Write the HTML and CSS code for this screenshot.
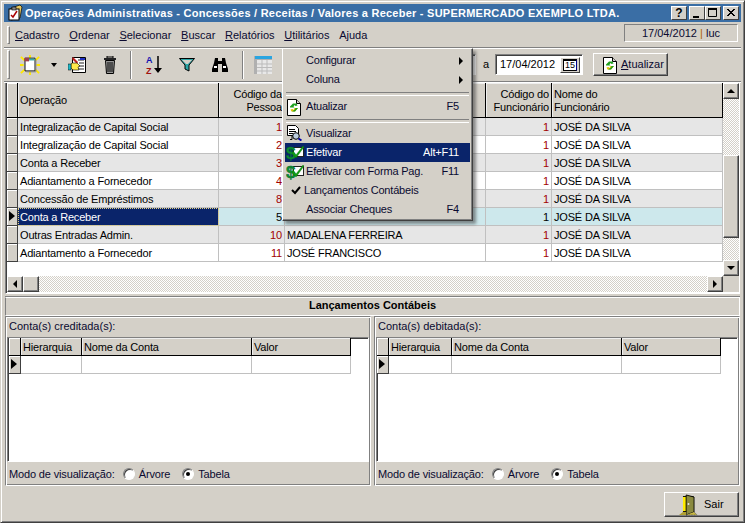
FILE: index.html
```html
<!DOCTYPE html>
<html lang="pt">
<head>
<meta charset="utf-8">
<title>Operações Administrativas</title>
<link rel="stylesheet" href="styles.css">
</head>
<body>
<svg class="defs" width="0" height="0">
  <symbol id="i-refresh" viewBox="0 0 16 18"><path d="M1.5 1.500h9l4 4v12h-13z" fill="#fff" stroke="#000"/><path d="M10.500 1.500v4h4" fill="#d4d0c8" stroke="#000"/><path d="M4 8.500 7 5.500h3.500l1 2-2 .5-1-1-1 1.500 1 1H4z" fill="#1fa01f"/><path d="M12 10l-3 3.500H5.500l-1-2 2-.5 1 1 1-1.500-1-.5H12z" fill="#e0c000"/><path d="M12 10l-3 3.500H6l3-2 .5-1.500H12z" fill="#1fa01f"/></symbol>
  <symbol id="i-view" viewBox="0 0 16 16"><path d="M1.500 .5h8l3 3v7h-11z" fill="#fff" stroke="#000"/><path d="M3 4.500h6M3 6.500h7M3 8.500h4M3 10.500h3v4h-2" stroke="#000" fill="none"/><circle cx="10" cy="11" r="3.300" fill="#bcd" stroke="#000"/><path d="M12.500 13.500l3 2" stroke="#00a" stroke-width="2"/></symbol>
</svg>
<div class="window">
  <header class="titlebar">
    <svg class="title-icon" width="18" height="18" viewBox="0 0 18 18"><path d="M5 4 14 1l2 2-2 11-9 2z" fill="#e8c860" stroke="#000" stroke-width=".7"/><rect x="3" y="5" width="10" height="11" fill="#fff" stroke="#000"/><path d="M5 11l2 2 4-6" fill="none" stroke="#a00" stroke-width="1.500"/><rect x="6" y="3" width="4" height="3" fill="#888" stroke="#000" stroke-width=".6"/></svg>
    <span class="title-text">Operações Administrativas - Concessões / Receitas / Valores a Receber - SUPERMERCADO EXEMPLO LTDA.</span>
    <div class="caption-btns">
      <span class="cap-btn cap-help">?</span>
      <span class="cap-gap"></span>
      <span class="cap-btn"><svg width="10" height="10"><rect x="1" y="8" width="6" height="2"/></svg></span>
      <span class="cap-btn"><svg width="10" height="10"><path d="M.5 1.500h8v7h-8z" fill="none" stroke="#000"/><rect x="0" y="0" width="9" height="2"/></svg></span>
      <span class="cap-gap"></span>
      <span class="cap-btn"><svg width="10" height="10"><path d="M1 1l7 7M2 1l7 7M8 1 1 8M9 1 2 8" stroke="#000"/></svg></span>
    </div>
  </header>

  <nav class="menubar">
    <span class="grip"></span>
    <span class="menu-item"><u>C</u>adastro</span>
    <span class="menu-item"><u>O</u>rdenar</span>
    <span class="menu-item"><u>S</u>elecionar</span>
    <span class="menu-item"><u>B</u>uscar</span>
    <span class="menu-item"><u>R</u>elatórios</span>
    <span class="menu-item"><u>U</u>tilitários</span>
    <span class="menu-item">A<u>j</u>uda</span>
    <span class="status-box">17/04/2012 <b class="pipe">|</b> luc</span>
  </nav>

  <div class="toolbar">
    <span class="grip tall"></span>
    <span class="tool tool-new"><svg width="20" height="20" viewBox="0 0 22 22"><path d="M11 0v4M11 18v4M1 2l4 4M21 2l-4 4M1 20l4-4M21 20l-4-4M0 11h4M18 11h4" stroke="#ffe800" stroke-width="2"/><path d="M5.500 3.500h11v14h-11z" fill="#fff" stroke="#000"/><rect x="5" y="3" width="5" height="4" fill="#a04050"/><rect x="10" y="4" width="6" height="2" fill="#3aa"/><path d="M7 18.500h10.500V5" fill="none" stroke="#888"/></svg></span>
    <span class="tool-arrow"></span>
    <span class="tool"><svg width="18" height="18" viewBox="0 0 18 18"><path d="M4.500 1.500h13v15h-13z" fill="#fff" stroke="#000"/><path d="M10 4h6M11 7h5M11 10h5M10 13h6" stroke="#222"/><path d="M5 1l5 5-1 2-5-5z" fill="#c02020"/><rect x="12" y="2" width="5" height="2" fill="#2030c0"/><path d="M4 7h5l3 3-2 1 1 3H5l-2-2V8z" fill="#ffe94a" stroke="#000" stroke-width=".6"/><rect x="0" y="8" width="3" height="6" fill="#20b8c8" stroke="#000" stroke-width=".5"/></svg></span>
    <span class="tool"><svg width="16" height="18" viewBox="0 0 16 18"><rect x="5" y="0" width="6" height="2" fill="none" stroke="#000"/><rect x="2" y="2" width="12" height="2" fill="#222"/><path d="M3.500 4.500h9l-1 13h-7z" fill="#999" stroke="#000"/><path d="M6 6v10M8 6v10M10 6v10" stroke="#000"/></svg></span>
    <span class="tool-sep"></span>
    <span class="tool"><svg width="18" height="20" viewBox="0 0 18 20"><text x="1" y="8" class="az-a">A</text><text x="1" y="19" class="az-z">Z</text><path d="M13 1v13" stroke="#000" stroke-width="1.500"/><path d="M9 13h8l-4 5z"/></svg></span>
    <span class="tool"><svg width="16" height="14" viewBox="0 0 16 14"><path d="M.5 .5h15L10 7v6L6 11V7z" fill="#2aa5a5" stroke="#000"/><path d="M3 2h10L9 6H7z" fill="#d4d0c8"/></svg></span>
    <span class="tool"><svg width="16" height="14" viewBox="0 0 16 14"><path d="M3 0h3v3h4V0h3l1 5 2 6v3H10V6H6v8H0v-3l2-6z"/><path d="M2 8h3v2H2zM11 8h3v2h-3z" fill="#fff"/></svg></span>
    <span class="tool-sep second"></span>
    <span class="tool"><svg width="18" height="18" viewBox="0 0 18 18"><rect x="0" y="0" width="18" height="18" fill="#b0b0b0"/><rect x="1" y="0" width="17" height="3" fill="#2aa5e0"/><rect x="3" y="4" width="15" height="14" fill="#e8e8e8"/><path d="M3 8h15M3 11.500h15M3 15h15M8 4v14M13 4v14" stroke="#bbb"/></svg></span>
    <span class="date-group">
      <span class="date-field hidden-date"><span class="cal-btn"></span></span>
      <span class="date-sep">a</span>
      <span class="date-field"><span class="date-value">17/04/2012</span><span class="cal-btn"><span class="cal-num">15</span></span></span>
    </span>
    <span class="btn btn-update"><svg width="16" height="18"><use href="#i-refresh"/></svg><span><u>A</u>tualizar</span></span>
  </div>

  <section class="main-grid">
    <div class="grid-body">
      <div class="row head">
        <div class="ind"></div>
        <div class="cell mid">Operação</div>
        <div class="cell num">Código da<br>Pessoa</div>
        <div class="cell"></div>
        <div class="cell num">Código do<br>Funcionário</div>
        <div class="cell">Nome do<br>Funcionário</div>
      </div>
      <div class="row alt"><div class="ind"></div><div class="cell">Integralização de Capital Social</div><div class="cell num red">1</div><div class="cell"></div><div class="cell num red">1</div><div class="cell">JOSÉ DA SILVA</div></div>
      <div class="row"><div class="ind"></div><div class="cell">Integralização de Capital Social</div><div class="cell num red">2</div><div class="cell"></div><div class="cell num red">1</div><div class="cell">JOSÉ DA SILVA</div></div>
      <div class="row alt"><div class="ind"></div><div class="cell">Conta a Receber</div><div class="cell num red">3</div><div class="cell"></div><div class="cell num red">1</div><div class="cell">JOSÉ DA SILVA</div></div>
      <div class="row"><div class="ind"></div><div class="cell">Adiantamento a Fornecedor</div><div class="cell num red">4</div><div class="cell"></div><div class="cell num red">1</div><div class="cell">JOSÉ DA SILVA</div></div>
      <div class="row alt"><div class="ind"></div><div class="cell">Concessão de Empréstimos</div><div class="cell num red">8</div><div class="cell"></div><div class="cell num red">1</div><div class="cell">JOSÉ DA SILVA</div></div>
      <div class="row selected"><div class="ind current"></div><div class="cell focus">Conta a Receber</div><div class="cell num">5</div><div class="cell"></div><div class="cell num">1</div><div class="cell">JOSÉ DA SILVA</div></div>
      <div class="row alt"><div class="ind"></div><div class="cell">Outras Entradas Admin.</div><div class="cell num red">10</div><div class="cell">MADALENA FERREIRA</div><div class="cell num red">1</div><div class="cell">JOSÉ DA SILVA</div></div>
      <div class="row"><div class="ind"></div><div class="cell">Adiantamento a Fornecedor</div><div class="cell num red">11</div><div class="cell">JOSÉ FRANCISCO</div><div class="cell num red">1</div><div class="cell">JOSÉ DA SILVA</div></div>
    </div>
    <div class="vscroll">
      <span class="sb-btn"><i class="tri up"></i></span>
      <span class="hatch grow-a"></span>
      <span class="sb-thumb v"></span>
      <span class="hatch grow-b"></span>
      <span class="sb-btn"><i class="tri down"></i></span>
    </div>
    <div class="hscroll">
      <span class="sb-btn"><i class="tri left"></i></span>
      <span class="sb-thumb h"></span>
      <span class="hatch grow-a"></span>
      <span class="sb-btn"><i class="tri right"></i></span>
    </div>
    <div class="corner"></div>
  </section>

  <h2 class="section-title">Lançamentos Contábeis</h2>

  <div class="panels">
    <section class="panel">
      <div class="panel-caption">Conta(s) creditada(s):</div>
      <div class="mini-grid">
        <div class="mini-row head"><div class="ind"></div><div class="cell">Hierarquia</div><div class="cell">Nome da Conta</div><div class="cell">Valor</div></div>
        <div class="mini-row"><div class="ind current"></div><div class="cell"></div><div class="cell"></div><div class="cell"></div></div>
      </div>
      <div class="mode-row">
        <span class="mode-label">Modo de visualização:</span>
        <span class="radio"></span><span class="radio-label">Árvore</span>
        <span class="radio on"></span><span class="radio-label">Tabela</span>
      </div>
    </section>
    <section class="panel debit">
      <div class="panel-caption">Conta(s) debitada(s):</div>
      <div class="mini-grid">
        <div class="mini-row head"><div class="ind"></div><div class="cell">Hierarquia</div><div class="cell">Nome da Conta</div><div class="cell">Valor</div></div>
        <div class="mini-row"><div class="ind current"></div><div class="cell"></div><div class="cell"></div><div class="cell"></div></div>
      </div>
      <div class="mode-row">
        <span class="mode-label">Modo de visualização:</span>
        <span class="radio"></span><span class="radio-label">Árvore</span>
        <span class="radio on"></span><span class="radio-label">Tabela</span>
      </div>
    </section>
  </div>

  <footer class="footer">
    <span class="btn btn-exit"><svg width="19" height="22" viewBox="0 0 24 22" preserveAspectRatio="none"><path d="M5 2.500h13v15H5" fill="#ffee00" stroke="#000"/><path d="M9 1l10 2v15l-10 3z" fill="#8a8a40" stroke="#000"/><rect x="11" y="9" width="2" height="2" fill="#ddd"/><path d="M0 21l5-3h4v3z" fill="#b0a030"/><path d="M19 18l4 3H9" fill="#c8b840" stroke="#555" stroke-dasharray="1 1"/></svg><span>Sair</span></span>
  </footer>

  <div class="popup">
    <div class="pop-item"><span class="pop-label">Configurar</span><i class="tri right"></i></div>
    <div class="pop-item"><span class="pop-label">Coluna</span><i class="tri right"></i></div>
    <div class="pop-sep"></div>
    <div class="pop-item"><svg class="pop-icon" width="16" height="18"><use href="#i-refresh"/></svg><span class="pop-label">Atualizar</span><span class="key">F5</span></div>
    <div class="pop-sep"></div>
    <div class="pop-item"><svg class="pop-icon" width="16" height="16"><use href="#i-view"/></svg><span class="pop-label">Visualizar</span></div>
    <div class="pop-item active"><svg class="pop-icon" width="18" height="18" viewBox="0 0 18 18"><rect x="7.500" y="3.500" width="10" height="9" fill="#fff" stroke="#222"/><text x="0" y="15" class="dollar">$</text><path d="M7 7l3 4 7-9 1 1-8 11-4-5z" fill="#12a012" stroke="#0a6a0a" stroke-width=".4"/></svg><span class="pop-label">Efetivar</span><span class="key">Alt+F11</span></div>
    <div class="pop-item"><svg class="pop-icon" width="18" height="18" viewBox="0 0 18 18"><rect x="7.500" y="3.500" width="10" height="9" fill="#fff" stroke="#222"/><text x="0" y="15" class="dollar">$</text><path d="M7 7l3 4 7-9 1 1-8 11-4-5z" fill="#12a012" stroke="#0a6a0a" stroke-width=".4"/></svg><span class="pop-label">Efetivar com Forma Pag.</span><span class="key">F11</span></div>
    <div class="pop-item"><svg class="pop-icon check" width="10" height="9" viewBox="0 0 10 9"><path d="M1 4l3 3 5-6" fill="none" stroke="#000" stroke-width="2"/></svg><span class="pop-label tight">Lançamentos Contábeis</span></div>
    <div class="pop-item"><span class="pop-label">Associar Cheques</span><span class="key">F4</span></div>
  </div>
</div>
</body>
</html>
```
FILE: styles.css
```css
* { box-sizing: border-box; }
html, body { margin: 0; padding: 0; }
body { width: 745px; height: 523px; overflow: hidden; font: 11px/13px "Liberation Sans", Arial, sans-serif; color: #000; background: #d4d0c8; }
.defs { position: absolute; }
u { text-decoration: underline; }

.window { position: relative; width: 745px; height: 523px; padding: 3px; background: #d4d0c8; border: 1px solid; border-color: #d4d0c8 #404040 #404040 #d4d0c8; box-shadow: inset 1px 1px 0 #fff, inset -1px -1px 0 #808080; display: flex; flex-direction: column; }

.titlebar { height: 18px; background: #3a6ea5; display: flex; align-items: center; padding-left: 2px; color: #fff; }
.title-icon { flex: none; margin-right: 1px; }
.title-text { font: bold 11px/18px "Liberation Sans", sans-serif; white-space: nowrap; letter-spacing: .24px; }
.caption-btns { margin-left: auto; display: flex; padding-right: 2px; }
.cap-btn { width: 16px; height: 14px; background: #d4d0c8; border: 1px solid; border-color: #fff #404040 #404040 #fff; display: flex; align-items: center; justify-content: center; color: #000; }
.cap-btn svg { display: block; }
.cap-help { font: bold 12px/12px "Liberation Sans", sans-serif; }
.cap-gap { width: 2px; }

.menubar { height: 23px; margin-top: 1px; display: flex; align-items: center; padding: 0 3px; }
.grip { width: 3px; height: 18px; border: 1px solid; border-color: #fff #808080 #808080 #fff; margin-right: 5px; }
.grip.tall { height: 29px; margin-right: 5px; }
.menu-item { margin-right: 9.700px; margin-top: 1px; white-space: nowrap; color: #0a0a30; }
.status-box { margin-left: auto; width: 114px; height: 18px; margin-top: -4px; border: 1px solid; border-color: #808080 #fff #fff #808080; text-align: center; line-height: 16px; color: #0a0a30; }
.pipe { color: #b06000; font-weight: normal; }

.toolbar { height: 35px; margin-top: 1px; border-top: 1px solid #808080; border-bottom: 1px solid #808080; box-shadow: inset 0 1px 0 #fff, 0 1px 0 #fff; display: flex; align-items: center; padding: 0 3px; position: relative; }
.tool { width: 33px; display: flex; justify-content: center; flex: none; }
.tool-new { width: 30px; }
.tool-arrow { width: 0; height: 0; border: 3.500px solid transparent; border-top: 4px solid #000; border-bottom: 0; margin: 0 4px 0 5.500px; flex: none; }
.tool-sep { width: 2px; height: 28px; border-left: 1px solid #808080; border-right: 1px solid #fff; margin: 0 6px 0 3px; flex: none; }
.tool-sep.second { margin: 0 3px 0 5px; }
.date-group { margin-left: auto; display: flex; align-items: center; }
.date-field { width: 88px; height: 21px; border: 1px solid; border-color: #808080 #fff #fff #808080; box-shadow: inset 1px 1px 0 #404040; background: #fff; display: flex; align-items: center; justify-content: space-between; padding: 2px; }
.hidden-date { width: 30px; }
.date-value { padding-left: 2px; }
.date-sep { margin: 0 6px 0 7px; }
.cal-btn { width: 20px; height: 16px; background: #d4d0c8; border: 1px solid; border-color: #fff #404040 #404040 #fff; display: flex; align-items: center; justify-content: center; }
.cal-num { font: 9px/9px "Liberation Sans", sans-serif; border: 1px solid #000; border-top-width: 2px; border-right-color: #000088; padding: 0 1px; background: #fff; }

.btn { background: #d4d0c8; border: 1px solid; border-color: #fff #404040 #404040 #fff; box-shadow: inset -1px -1px 0 #808080; display: flex; align-items: center; }
.btn-update { width: 75px; height: 23px; margin: 0 70px 0 10px; padding-left: 8px; gap: 3px; color: #0a0a30; }

.main-grid { margin: 0 0 0 1px; height: 212px; width: 735px; border: 1px solid; border-color: #808080 #fff #fff #808080; box-shadow: inset 1px 1px 0 #404040; background: #fff; display: grid; grid-template-columns: 1fr 16px; grid-template-rows: 1fr 16px; padding: 0 0 1px 1px; }
.grid-body { overflow: hidden; }
.row { display: grid; grid-template-columns: 11px 201px 66px 201px 66px 171px; height: 18px; }
.row.head { height: 35px; }
.cell { border-right: 1px solid #c0c0c0; border-bottom: 1px solid #c0c0c0; padding: 0 2px; line-height: 19px; letter-spacing: -.18px; white-space: nowrap; overflow: hidden; }
.num { text-align: right; }
.red { color: #a00000; }
.alt .cell { background: #e6e6e6; }
.selected .cell { background: #cde8ec; }
.selected .cell.focus { background: #0a246a; color: #fff; outline: 1px dotted #e0d080; outline-offset: -1px; }
.ind { background: #d4d0c8; border-right: 1px solid #404040; border-bottom: 1px solid #404040; box-shadow: inset 1px 1px 0 #fff; position: relative; }
.ind.current::after { content: ""; position: absolute; left: 2px; top: 3px; border: 5px solid transparent; border-left: 6px solid #000; border-right: 0; }
.head .cell { background: #d4d0c8; border-right-color: #000; border-bottom-color: #000; box-shadow: inset 1px 1px 0 #eee; line-height: 13px; padding-top: 5px; }
.head .cell.mid { line-height: 34px; padding-top: 0; }
.head .ind { border-right-color: #000; border-bottom-color: #000; }

.vscroll { display: flex; flex-direction: column; min-height: 0; }
.hscroll { display: flex; height: 16px; }
.corner { background: #d4d0c8; }
.sb-btn, .sb-thumb { background: #d4d0c8; border: 1px solid; border-color: #fff #404040 #404040 #fff; box-shadow: inset -1px -1px 0 #808080; flex: none; display: flex; align-items: center; justify-content: center; }
.sb-btn { width: 16px; height: 16px; }
.sb-thumb.v { width: 16px; height: 83px; }
.sb-thumb.h { width: 16px; height: 16px; }
.hatch { background: repeating-conic-gradient(#d4d0c8 0 25%, #fff 0 50%) 0 0 / 2px 2px; flex: 1 1 0; }
.vscroll .grow-a { flex: 56 1 0; }
.vscroll .grow-b { flex: 22 1 0; }
.tri { display: block; width: 0; height: 0; border: 4px solid transparent; }
.tri.up { border-top: 0; border-bottom: 4px solid #000; }
.tri.down { border-bottom: 0; border-top: 4px solid #000; }
.tri.left { border-left: 0; border-right: 4px solid #000; }
.tri.right { border-right: 0; border-left: 4px solid #000; }

.section-title { margin: 3px 0 0 1px; width: 735px; height: 19px; font: bold 11px/15px "Liberation Sans", sans-serif; text-align: center; border: 1px solid; border-color: #fff #fff #fff #808080; box-shadow: 0 -1px 0 #808080; }

.panels { display: flex; gap: 3px; margin: 0 0 0 1px; width: 735px; height: 170px; }
.panel { flex: none; width: 366px; border: 1px solid; border-color: #808080 #fff #fff #808080; box-shadow: inset 1px 1px 0 #fff, inset -1px -1px 0 #808080; display: flex; flex-direction: column; padding: 1px; }
.panel-caption { height: 19px; line-height: 16px; padding-left: 2px; color: #0a0a30; }
.mini-grid { flex: 1; background: #fff; border: 1px solid; border-color: #808080 #fff #fff #808080; box-shadow: inset 1px 1px 0 #404040; padding: 0 1px 1px 1px; }
.debit .mini-grid { padding-left: 0; }
.mini-row { display: grid; grid-template-columns: 12px 61px 170px 99px; height: 18px; }
.debit .mini-row { grid-template-columns: 12px 63px 170px 99px; }
.mini-row .cell { line-height: 18px; }
.mini-row.head .cell { padding-top: 0; line-height: 18px; }
.mode-row { height: 22px; display: flex; align-items: center; padding: 2px 0 0 2px; color: #0a0a30; letter-spacing: -.15px; }
.mode-label { margin-right: 8px; }
.radio { width: 12px; height: 12px; border-radius: 50%; background: #fff; border: 1px solid; border-color: #808080 #fff #fff #808080; box-shadow: inset 1px 1px 0 #404040, 0 0 0 1px #d4d0c8; position: relative; flex: none; }
.radio.on::after { content: ""; position: absolute; left: 3px; top: 3px; width: 4px; height: 4px; border-radius: 50%; background: #000; }
.radio-label { margin: 1px 12px 0 4px; color: #0a0a30; }

.footer { flex: 1; display: flex; justify-content: flex-end; align-items: flex-start; padding: 6px 2px 0 0; }
.btn-exit { width: 75px; height: 25px; padding-left: 14px; gap: 6px; }

.popup { position: absolute; left: 281px; top: 47px; width: 191px; height: 173px; background: #d4d0c8; border: 1px solid; border-color: #fff #404040 #404040 #fff; box-shadow: inset -1px -1px 0 #808080, 3px 3px 3px rgba(60,60,60,.55); padding: 2px; color: #0a0a30; }
.pop-item { height: 19px; display: flex; align-items: center; position: relative; padding: 0 11px 0 21px; white-space: nowrap; letter-spacing: -.2px; }
.pop-item .tri { margin-left: auto; margin-right: -4px; }
.pop-label { flex: none; }
.pop-label.tight { margin-left: -2px; }
.key { margin-left: auto; }
.pop-sep { height: 8px; position: relative; }
.pop-sep::after { content: ""; position: absolute; left: 1px; right: 1px; top: 3px; height: 2px; border-top: 1px solid #808080; border-bottom: 1px solid #fff; }
.pop-item.active { background: #0a246a; color: #fff; }
.pop-icon { position: absolute; left: 1px; top: 1px; }
.pop-icon.check { left: 6px; top: 5px; }

.az-a { font: bold 9px "Liberation Sans", sans-serif; fill: #1010b0; }
.az-z { font: bold 9px "Liberation Sans", sans-serif; fill: #a01010; }
.dollar { font: bold 17px "Liberation Sans", sans-serif; fill: #0f8f2f; stroke: #063; stroke-width: .4px; }
```
